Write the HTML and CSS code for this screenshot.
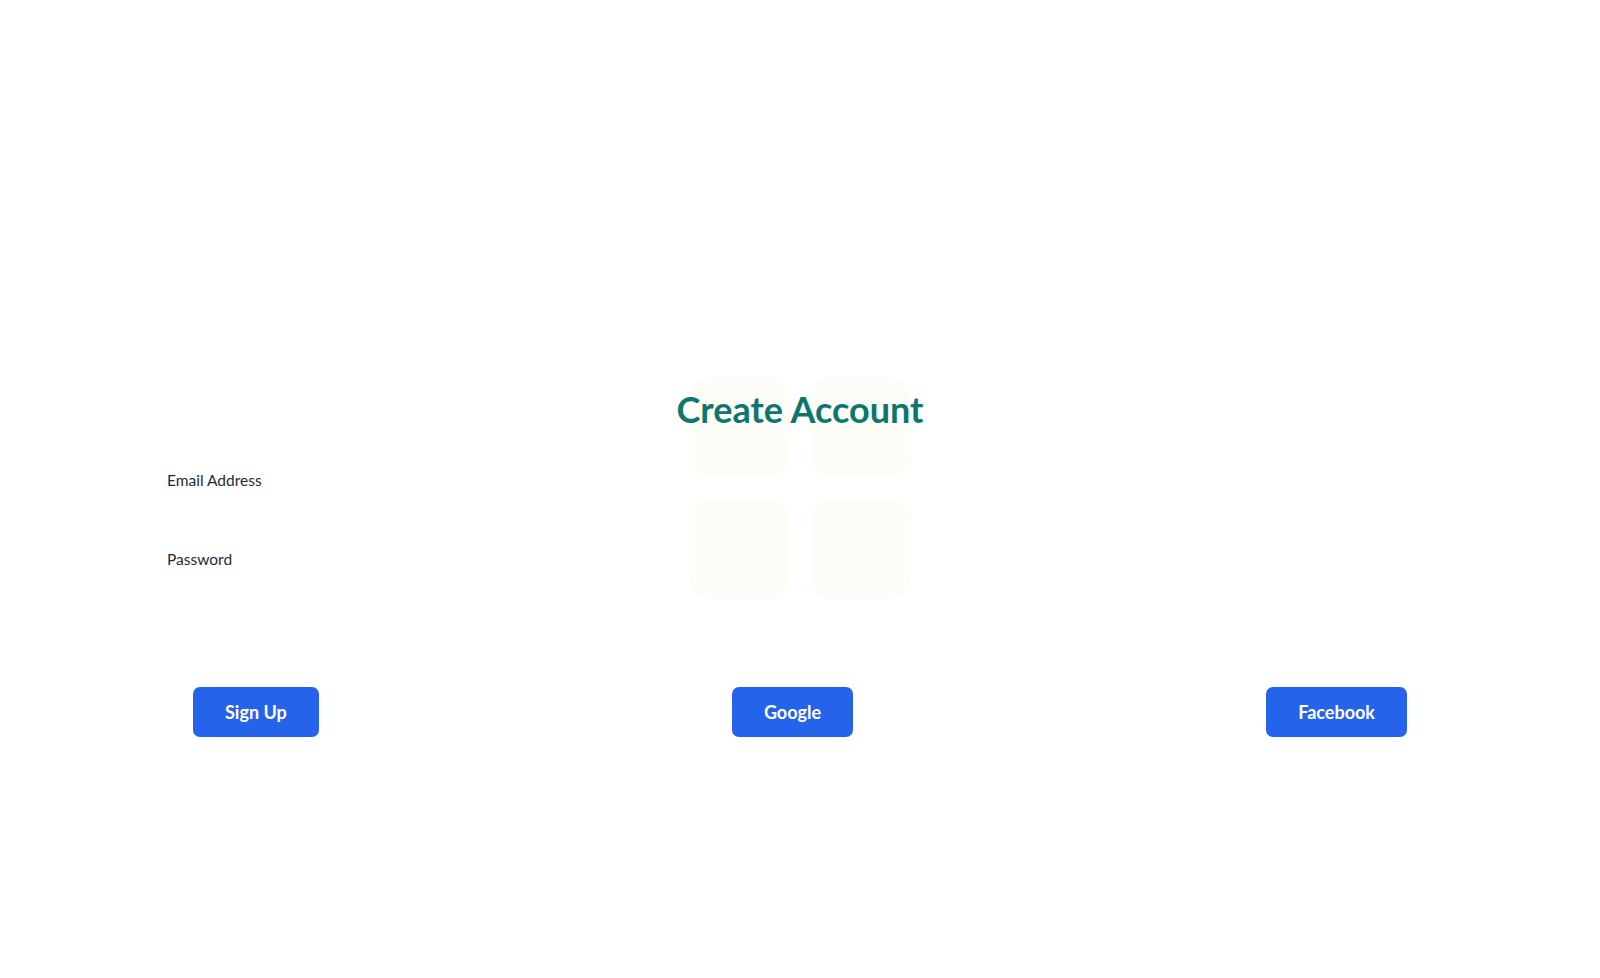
FILE: index.html
```html
<!DOCTYPE html>
<html lang="en">
<head>
    <meta charset="UTF-8">
    <meta name="viewport" content="width=device-width, initial-scale=1.0">
    <title>Create Account</title>
    <link rel="stylesheet" href="styles.css">
</head>
<body>
    <!-- Background tiles -->
    <div class="tiles">
        <div class="tile"></div>
        <div class="tile"></div>
        <div class="tile"></div>
        <div class="tile"></div>
    </div>

    <div class="page">
        <h1>Create Account</h1>

        <form class="signup-form" onsubmit="return false">
            <div class="field">
                <label for="email">Email Address</label>
                <input type="email" id="email">
            </div>
            <div class="field">
                <label for="password">Password</label>
                <input type="password" id="password">
            </div>

            <div class="button-row">
                <button type="submit">Sign Up</button>
                <button type="button">Google</button>
                <button type="button">Facebook</button>
            </div>
        </form>
    </div>
</body>
</html>
```

FILE: styles.css
```css
body {
    margin: 0;
    font-family: 'Lato', 'Inter', sans-serif;
    background-color: #ffffff;
    color: #1f2937;
    min-height: 100vh;
}

.tiles {
    position: absolute;
    top: 377px;
    left: 50%;
    transform: translateX(-50%);
    display: grid;
    grid-template-columns: 100px 100px;
    grid-auto-rows: 100px;
    gap: 22px;
}

.tile {
    background-color: #fdfcf6;
    border-radius: 22px;
}

.page {
    position: relative;
    z-index: 1;
    padding-top: 389px;
}

h1 {
    margin: 0;
    font-size: 36px;
    line-height: 40px;
    font-weight: 700;
    text-align: center;
    color: #0f766e;
}

.signup-form {
    padding: 41px 167px 0;
}

.field {
    display: flex;
    flex-direction: column;
    margin-bottom: 11px;
}

.field label {
    font-size: 15.5px;
    line-height: 20px;
    margin-bottom: 8px;
}

.field input {
    height: 40px;
    border: none;
    background: transparent;
    padding: 0;
    outline: none;
}

.button-row {
    display: flex;
    justify-content: space-between;
    padding: 0 26px;
    margin-top: 70px;
}

button {
    padding: 12px 32px;
    font-family: inherit;
    font-size: 18px;
    line-height: 26px;
    font-weight: 700;
    border: none;
    border-radius: 7px;
    background-color: #2563eb;
    color: #ffffff;
    cursor: pointer;
}

button:hover {
    background-color: #1d4ed8;
}
```
